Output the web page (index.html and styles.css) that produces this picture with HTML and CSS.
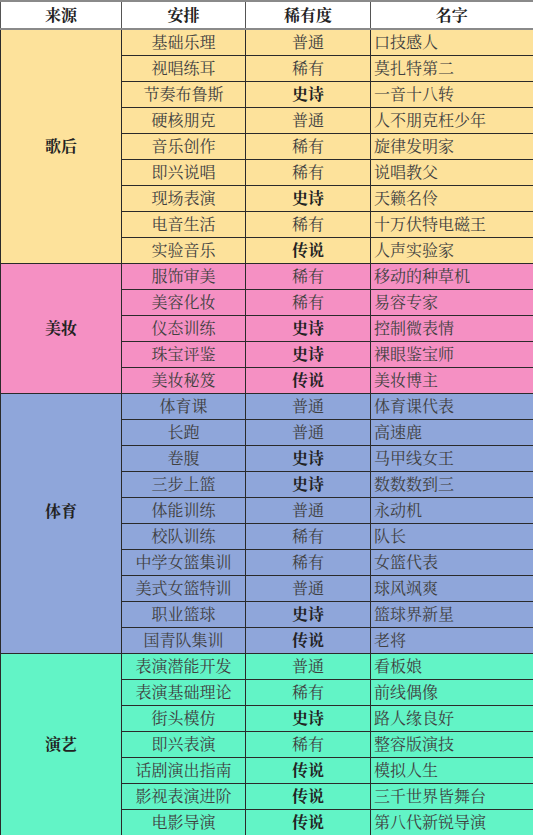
FILE: index.html
```html
<!DOCTYPE html>
<html lang="zh">
<head>
<meta charset="utf-8">
<link rel="stylesheet" href="styles.css">
</head>
<body>
<table class="tbl">
<colgroup><col class="c1"><col class="c2"><col class="c3"><col class="c4"></colgroup>
<thead>
<tr class="head"><th>来源</th><th>安排</th><th>稀有度</th><th>名字</th></tr>
</thead>
<tbody class="g-yellow">
<tr><td class="src" rowspan="9">歌后</td><td>基础乐理</td><td class="r">普通</td><td class="n">口技感人</td></tr>
<tr><td>视唱练耳</td><td class="r">稀有</td><td class="n">莫扎特第二</td></tr>
<tr><td>节奏布鲁斯</td><td class="r b">史诗</td><td class="n">一音十八转</td></tr>
<tr><td>硬核朋克</td><td class="r">普通</td><td class="n">人不朋克枉少年</td></tr>
<tr><td>音乐创作</td><td class="r">稀有</td><td class="n">旋律发明家</td></tr>
<tr><td>即兴说唱</td><td class="r">稀有</td><td class="n">说唱教父</td></tr>
<tr><td>现场表演</td><td class="r b">史诗</td><td class="n">天籁名伶</td></tr>
<tr><td>电音生活</td><td class="r">稀有</td><td class="n">十万伏特电磁王</td></tr>
<tr><td>实验音乐</td><td class="r b">传说</td><td class="n">人声实验家</td></tr>
</tbody>
<tbody class="g-pink">
<tr><td class="src" rowspan="5">美妆</td><td>服饰审美</td><td class="r">稀有</td><td class="n">移动的种草机</td></tr>
<tr><td>美容化妆</td><td class="r">稀有</td><td class="n">易容专家</td></tr>
<tr><td>仪态训练</td><td class="r b">史诗</td><td class="n">控制微表情</td></tr>
<tr><td>珠宝评鉴</td><td class="r b">史诗</td><td class="n">裸眼鉴宝师</td></tr>
<tr><td>美妆秘笈</td><td class="r b">传说</td><td class="n">美妆博主</td></tr>
</tbody>
<tbody class="g-blue">
<tr><td class="src src-up" rowspan="10">体育</td><td>体育课</td><td class="r">普通</td><td class="n">体育课代表</td></tr>
<tr><td>长跑</td><td class="r">普通</td><td class="n">高速鹿</td></tr>
<tr><td>卷腹</td><td class="r b">史诗</td><td class="n">马甲线女王</td></tr>
<tr><td>三步上篮</td><td class="r b">史诗</td><td class="n">数数数到三</td></tr>
<tr><td>体能训练</td><td class="r">普通</td><td class="n">永动机</td></tr>
<tr><td>校队训练</td><td class="r">稀有</td><td class="n">队长</td></tr>
<tr><td>中学女篮集训</td><td class="r">稀有</td><td class="n">女篮代表</td></tr>
<tr><td>美式女篮特训</td><td class="r">普通</td><td class="n">球风飒爽</td></tr>
<tr><td>职业篮球</td><td class="r b">史诗</td><td class="n">篮球界新星</td></tr>
<tr><td>国青队集训</td><td class="r b">传说</td><td class="n">老将</td></tr>
</tbody>
<tbody class="g-green">
<tr><td class="src" rowspan="7">演艺</td><td>表演潜能开发</td><td class="r">普通</td><td class="n">看板娘</td></tr>
<tr><td>表演基础理论</td><td class="r">稀有</td><td class="n">前线偶像</td></tr>
<tr><td>街头模仿</td><td class="r b">史诗</td><td class="n">路人缘良好</td></tr>
<tr><td>即兴表演</td><td class="r">稀有</td><td class="n">整容版演技</td></tr>
<tr><td>话剧演出指南</td><td class="r b">传说</td><td class="n">模拟人生</td></tr>
<tr><td>影视表演进阶</td><td class="r b">传说</td><td class="n">三千世界皆舞台</td></tr>
<tr><td>电影导演</td><td class="r b">传说</td><td class="n">第八代新锐导演</td></tr>
</tbody>
</table>
</body>
</html>
```
FILE: styles.css
```css
html, body {
  margin: 0;
  padding: 0;
  background: #ffffff;
}
.tbl {
  width: 533px;
  table-layout: fixed;
  border-collapse: collapse;
  font-family: "Noto Serif CJK SC", "Noto Sans CJK SC", serif;
  font-size: 16px;
  color: #404040;
  border-left: 1px solid #222;
  border-right: 2px solid #888;
}
.c1 { width: 121px; }
.c2 { width: 124px; }
.c3 { width: 125px; }
.c4 { width: 163px; }
.tbl th, .tbl td {
  border: 1px solid #2a2a2a;
  padding: 0;
  text-align: center;
  line-height: 20px;
  white-space: nowrap;
  overflow: hidden;
}
.head th {
  height: 26px;
  background: #ffffff;
  font-weight: 700;
  color: #222;
  border-top: 2px solid #8a8a8a;
  border-bottom: 2px solid #8a8a8a;
  border-left: 1px solid #555;
  border-right: 1px solid #555;
}
.tbl tbody tr { height: 26px; }
.tbl td.src { font-weight: 700; color: #222; }
.tbl td.src-up { padding-bottom: 24px; }
.tbl td.r { text-align: center; }
.tbl td.b { font-weight: 700; color: #222; }
.tbl td.n { text-align: left; padding-left: 3px; }
.g-yellow td { background: #fde29b; }
.g-pink td { background: #f590c3; }
.g-blue td { background: #8fa6da; }
.g-green td { background: #62f4c6; }
```
